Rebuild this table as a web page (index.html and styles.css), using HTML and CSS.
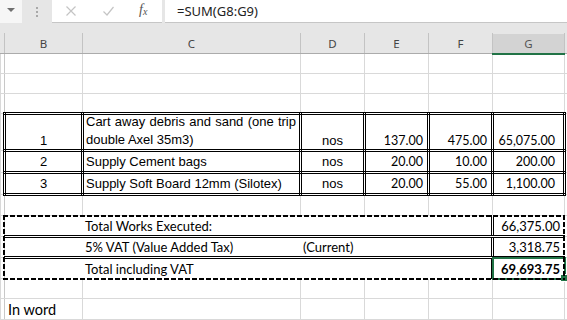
FILE: index.html
```html
<!DOCTYPE html>
<html>
<head>
<meta charset="utf-8">
<link rel="stylesheet" href="styles.css">
</head>
<body>
<div class="app">
  <div class="fbar">
    <div class="namebox"><span class="caret"></span></div>
    <div class="grip"><i></i><i></i><i></i></div>
    <div class="btns">
      <svg class="ico" width="12" height="12" viewBox="0 0 12 12"><path d="M1.5 1.5L10.5 10.5M10.5 1.5L1.5 10.5" stroke="#c4c4c4" stroke-width="1.2" fill="none"/></svg>
      <svg class="ico" width="13" height="12" viewBox="0 0 13 12"><path d="M1.5 6.5L5 10L11.5 2" stroke="#c4c4c4" stroke-width="1.2" fill="none"/></svg>
      <span class="fx">f<span class="fxx">x</span></span>
    </div>
    <div class="formula">=SUM(G8:G9)</div>
  </div>
  <div class="strip"></div>
  <div class="sheet">
    <table class="grid">
      <colgroup>
        <col class="c-rh"><col class="c-b"><col class="c-c"><col class="c-d"><col class="c-e"><col class="c-f"><col class="c-g"><col class="c-h">
      </colgroup>
      <tr class="hdr">
        <th class="rh"></th><th>B</th><th>C</th><th>D</th><th>E</th><th>F</th><th class="sel">G</th><th></th>
      </tr>
      <tr class="blank"><td class="rh"></td><td></td><td></td><td></td><td></td><td></td><td></td><td></td></tr>
      <tr class="blank"><td class="rh"></td><td></td><td></td><td></td><td></td><td></td><td></td><td></td></tr>
      <tr class="blank"><td class="rh"></td><td></td><td></td><td></td><td></td><td></td><td></td><td></td></tr>
      <tr class="item tall">
        <td class="rh"></td>
        <td class="bx ctr bot">1</td>
        <td class="bx desc"><div class="wrap">Cart away debris and sand (one trip double Axel 35m3)</div></td>
        <td class="bx ctr bot">nos</td>
        <td class="bx num bot">137.00</td>
        <td class="bx num bot">475.00</td>
        <td class="bx num gnum bot">65,075.00</td>
        <td></td>
      </tr>
      <tr class="item r2">
        <td class="rh"></td>
        <td class="bx ctr">2</td>
        <td class="bx txt">Supply Cement bags</td>
        <td class="bx ctr">nos</td>
        <td class="bx num">20.00</td>
        <td class="bx num">10.00</td>
        <td class="bx num gnum">200.00</td>
        <td></td>
      </tr>
      <tr class="item r3">
        <td class="rh"></td>
        <td class="bx ctr">3</td>
        <td class="bx txt">Supply Soft Board 12mm (Silotex)</td>
        <td class="bx ctr">nos</td>
        <td class="bx num">20.00</td>
        <td class="bx num">55.00</td>
        <td class="bx num gnum">1,100.00</td>
        <td></td>
      </tr>
      <tr class="blank b2"><td class="rh"></td><td></td><td></td><td></td><td></td><td></td><td></td><td></td></tr>
      <tr class="sum s1">
        <td class="rh"></td>
        <td class="sc"></td>
        <td class="sc stxt">Total Works Executed:</td>
        <td class="sc"></td>
        <td class="sc"></td>
        <td class="sc"></td>
        <td class="sc sg">66,375.00</td>
        <td></td>
      </tr>
      <tr class="sum s2">
        <td class="rh"></td>
        <td class="sc"></td>
        <td class="sc stxt">5% VAT (Value Added Tax)</td>
        <td class="sc stxt">(Current)</td>
        <td class="sc"></td>
        <td class="sc"></td>
        <td class="sc sg">3,318.75</td>
        <td></td>
      </tr>
      <tr class="sum s3">
        <td class="rh"></td>
        <td class="sc"></td>
        <td class="sc stxt">Total including VAT</td>
        <td class="sc"></td>
        <td class="sc"></td>
        <td class="sc"></td>
        <td class="sc sg bold active">69,693.75</td>
        <td></td>
      </tr>
      <tr class="blank"><td class="rh"></td><td></td><td></td><td></td><td></td><td></td><td></td><td></td></tr>
      <tr class="word">
        <td class="rh"></td>
        <td class="wtxt">In word</td>
        <td></td><td></td><td></td><td></td><td></td><td></td>
      </tr>
    </table>
    <div class="marquee"></div>
  </div>
</div>
</body>
</html>
```

FILE: styles.css
```css
* { box-sizing: border-box; }
html, body { margin: 0; padding: 0; background: #fff; }
body {
  width: 567px;
  height: 320px;
  overflow: hidden;
  font-family: "Liberation Sans", Arial, sans-serif;
  color: #000;
}

/* formula bar */
.fbar {
  display: flex;
  height: 23px;
  background: #e6e6e6;
}
.namebox {
  width: 22px;
  background: #f6f6f6;
  display: flex;
  align-items: center;
  justify-content: center;
}
.caret {
  width: 0;
  height: 0;
  border-left: 4px solid transparent;
  border-right: 4px solid transparent;
  border-top: 4px solid #6f6f6f;
  margin-top: -3px;
}
.grip {
  width: 30px;
  display: flex;
  flex-direction: column;
  align-items: center;
  justify-content: center;
  gap: 2px;
}
.grip i {
  display: block;
  width: 2px;
  height: 2px;
  background: #a8a8a8;
}
.btns {
  width: 110px;
  background: #fff;
  border-bottom: 1px solid #c6c6c6;
  display: flex;
  align-items: center;
  padding-left: 13px;
}
.ico { display: block; }
.ico + .ico { margin-left: 25px; }
.fx {
  margin-left: 24px;
  font-family: "Liberation Serif", serif;
  font-style: italic;
  font-size: 14px;
  color: #555;
  line-height: 1;
  margin-top: -3px;
}
.fxx { font-size: 10px; position: relative; top: 1px; }
.formula {
  flex: 1;
  margin-left: 3px;
  background: #fff;
  border-bottom: 1px solid #c6c6c6;
  font-family: "Noto Sans", "Open Sans", sans-serif;
  font-size: 13px;
  line-height: 22px;
  padding-left: 12px;
  color: #222;
}
.strip {
  height: 10px;
  background: #e6e6e6;
}

/* sheet */
.sheet { position: relative; }
.grid {
  border-collapse: collapse;
  table-layout: fixed;
  width: 614px;
}
.c-rh { width: 4px; }
.c-b { width: 78px; }
.c-c { width: 218px; }
.c-d { width: 64px; }
.c-e { width: 64px; }
.c-f { width: 64px; }
.c-g { width: 72px; }
.c-h { width: 50px; }

.grid td, .grid th {
  padding: 0;
  border: 1px solid #d9d9d9;
  overflow: hidden;
  white-space: nowrap;
  font-size: 13px;
  font-weight: normal;
}
.grid td.rh { border-right-color: #c8c8c8; }

.hdr { height: 20px; }
.grid .hdr th {
  background: #e6e6e6;
  border-top-color: #e6e6e6;
  border-left-color: #c3c3c3;
  border-right-color: #c3c3c3;
  border-bottom-color: #ababab;
  font-family: "Noto Sans", "Open Sans", sans-serif;
  font-size: 11.5px;
  color: #444;
  text-align: center;
  vertical-align: middle;
}
.grid .hdr th.rh { border-left-color: #e6e6e6; }
.grid .hdr th.sel {
  background: #d3d3d3;
  color: #555;
  border-bottom: 2px solid #217346;
}

.blank { height: 20px; }
.b2 { height: 21px; }

.grid .item .bx { border: 3px double #000; }
.tall { height: 37px; }
.r2 { height: 22px; }
.r3 { height: 22px; }

.grid .ctr { text-align: center; vertical-align: middle; }
.grid .txt { padding-left: 2px; vertical-align: middle; }
.grid .num {
  text-align: right;
  padding-right: 4px;
  font-family: "Lato", sans-serif;
  font-size: 12.5px;
  vertical-align: middle;
}
.grid .gnum { padding-right: 8px; }
.grid .bot { vertical-align: bottom; padding-bottom: 1px; }

.grid .desc { vertical-align: top; padding: 0 3px 0 2px; }
.wrap {
  white-space: normal;
  text-align: justify;
  line-height: 18px;
  margin-top: -2px;
  margin-bottom: -3px;
}

.sum { height: 21px; }
.grid .sum .sc {
  border-color: #fff;
  font-family: "Lato", sans-serif;
  font-size: 13px;
  vertical-align: middle;
}
.grid .s1 .sc, .grid .s2 .sc { border-bottom: 3px double #000; }
.grid .sum .sg {
  border-left: 3px double #000;
  text-align: right;
  padding-right: 4px;
}
.grid .stxt { padding-left: 2px; overflow: visible; }
.grid .bold { font-weight: bold; }

.grid .active {
  position: relative;
  outline: 2px solid #217346;
  outline-offset: -1px;
  overflow: visible;
}
.grid .active::after {
  content: "";
  position: absolute;
  right: -4px;
  bottom: -4px;
  width: 6px;
  height: 6px;
  background: #217346;
  border: 1px solid #fff;
}

.word { height: 21px; }
.grid .wtxt {
  font-family: "Lato", sans-serif;
  font-size: 14.5px;
  padding-left: 3px;
  vertical-align: middle;
}

.marquee {
  position: absolute;
  left: 3px;
  top: 182px;
  width: 562px;
  height: 65px;
  pointer-events: none;
  background:
    repeating-linear-gradient(90deg, #000 0 5px, transparent 5px 7px) left top / 100% 2px no-repeat,
    repeating-linear-gradient(90deg, #000 0 5px, transparent 5px 7px) left bottom / 100% 2px no-repeat,
    repeating-linear-gradient(180deg, #000 0 5px, transparent 5px 7px) left top / 2px 100% no-repeat,
    repeating-linear-gradient(180deg, #000 0 5px, transparent 5px 7px) right top / 2px 100% no-repeat;
}
```
